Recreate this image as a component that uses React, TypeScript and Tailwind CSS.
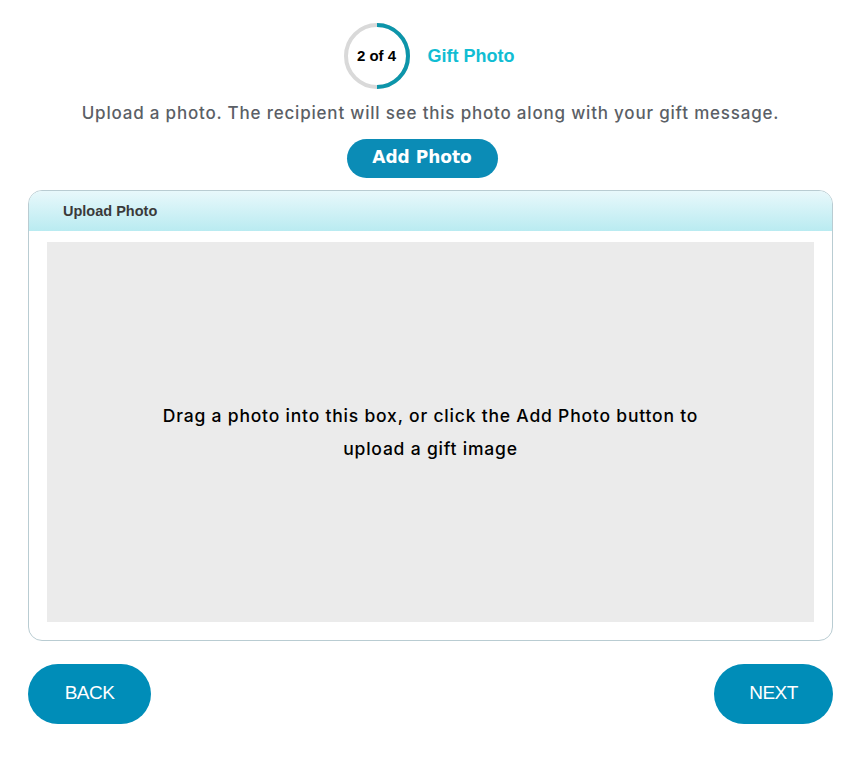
import React from 'react';

const StepRing = () => (
  <div className="relative w-[66px] h-[66px]">
    <svg width="66" height="66" viewBox="0 0 66 66" className="absolute inset-0">
      <circle cx="33" cy="33" r="31" fill="none" stroke="#d9d9d9" strokeWidth="4" />
      <path d="M33 2 A31 31 0 0 1 33 64" fill="none" stroke="#0c95aa" strokeWidth="4" />
    </svg>
    <div className="absolute inset-0 flex items-center justify-center font-['Liberation_Sans',Arial,sans-serif] font-bold text-[15px] text-black">
      2 of 4
    </div>
  </div>
);

const App: React.FC = () => {
  return (
    <div className="w-[867px] min-h-[779px] bg-white pl-[28px] pr-[34px] pt-[23px] font-['Inter',sans-serif]">
      <div className="flex items-center justify-center gap-[18px] pr-[3px]">
        <StepRing />
        <span className="font-['Liberation_Sans',Arial,sans-serif] font-bold text-[18px] text-[#11bdd3]">Gift Photo</span>
      </div>

      <p className="mt-[12px] text-center text-[17px] font-medium text-[#5b5f66] tracking-[0.8px]">
        Upload a photo. The recipient will see this photo along with your gift message.
      </p>

      <div className="flex justify-center mt-[12px] pr-[17px]">
        <button className="h-[39px] w-[151px] rounded-full bg-[#0b8cb6] text-white font-['DejaVu_Sans',Verdana,sans-serif] font-bold text-[17px]">
          Add Photo
        </button>
      </div>

      <div className="mt-[12px] h-[451px] rounded-[14px] border border-[#b9ccd2] overflow-hidden flex flex-col">
        <div className="h-[40px] bg-gradient-to-b from-[#e8f8fb] to-[#b9ebf1] flex items-center pl-[34px] pt-[2px]">
          <span className="font-['Liberation_Sans',Arial,sans-serif] font-bold text-[14.5px] text-[#3a3a3a]">Upload Photo</span>
        </div>
        <div className="flex-1 px-[18px] pt-[11px] pb-[18px]">
          <div className="h-full bg-[#ebebeb] flex items-center justify-center">
            <p className="text-center text-[17.5px] font-medium text-black leading-[33px] tracking-[0.8px] w-[570px]">
              Drag a photo into this box, or click the Add Photo button to upload a gift image
            </p>
          </div>
        </div>
      </div>

      <div className="flex justify-between mt-[23px]">
        <button className="h-[60px] w-[123px] rounded-full bg-[#008db8] text-white font-['Liberation_Sans',Arial,sans-serif] text-[19px] tracking-[-0.5px]">
          BACK
        </button>
        <button className="h-[60px] w-[119px] rounded-full bg-[#008db8] text-white font-['Liberation_Sans',Arial,sans-serif] text-[19px] tracking-[-0.5px]">
          NEXT
        </button>
      </div>
    </div>
  );
};

export default App;
